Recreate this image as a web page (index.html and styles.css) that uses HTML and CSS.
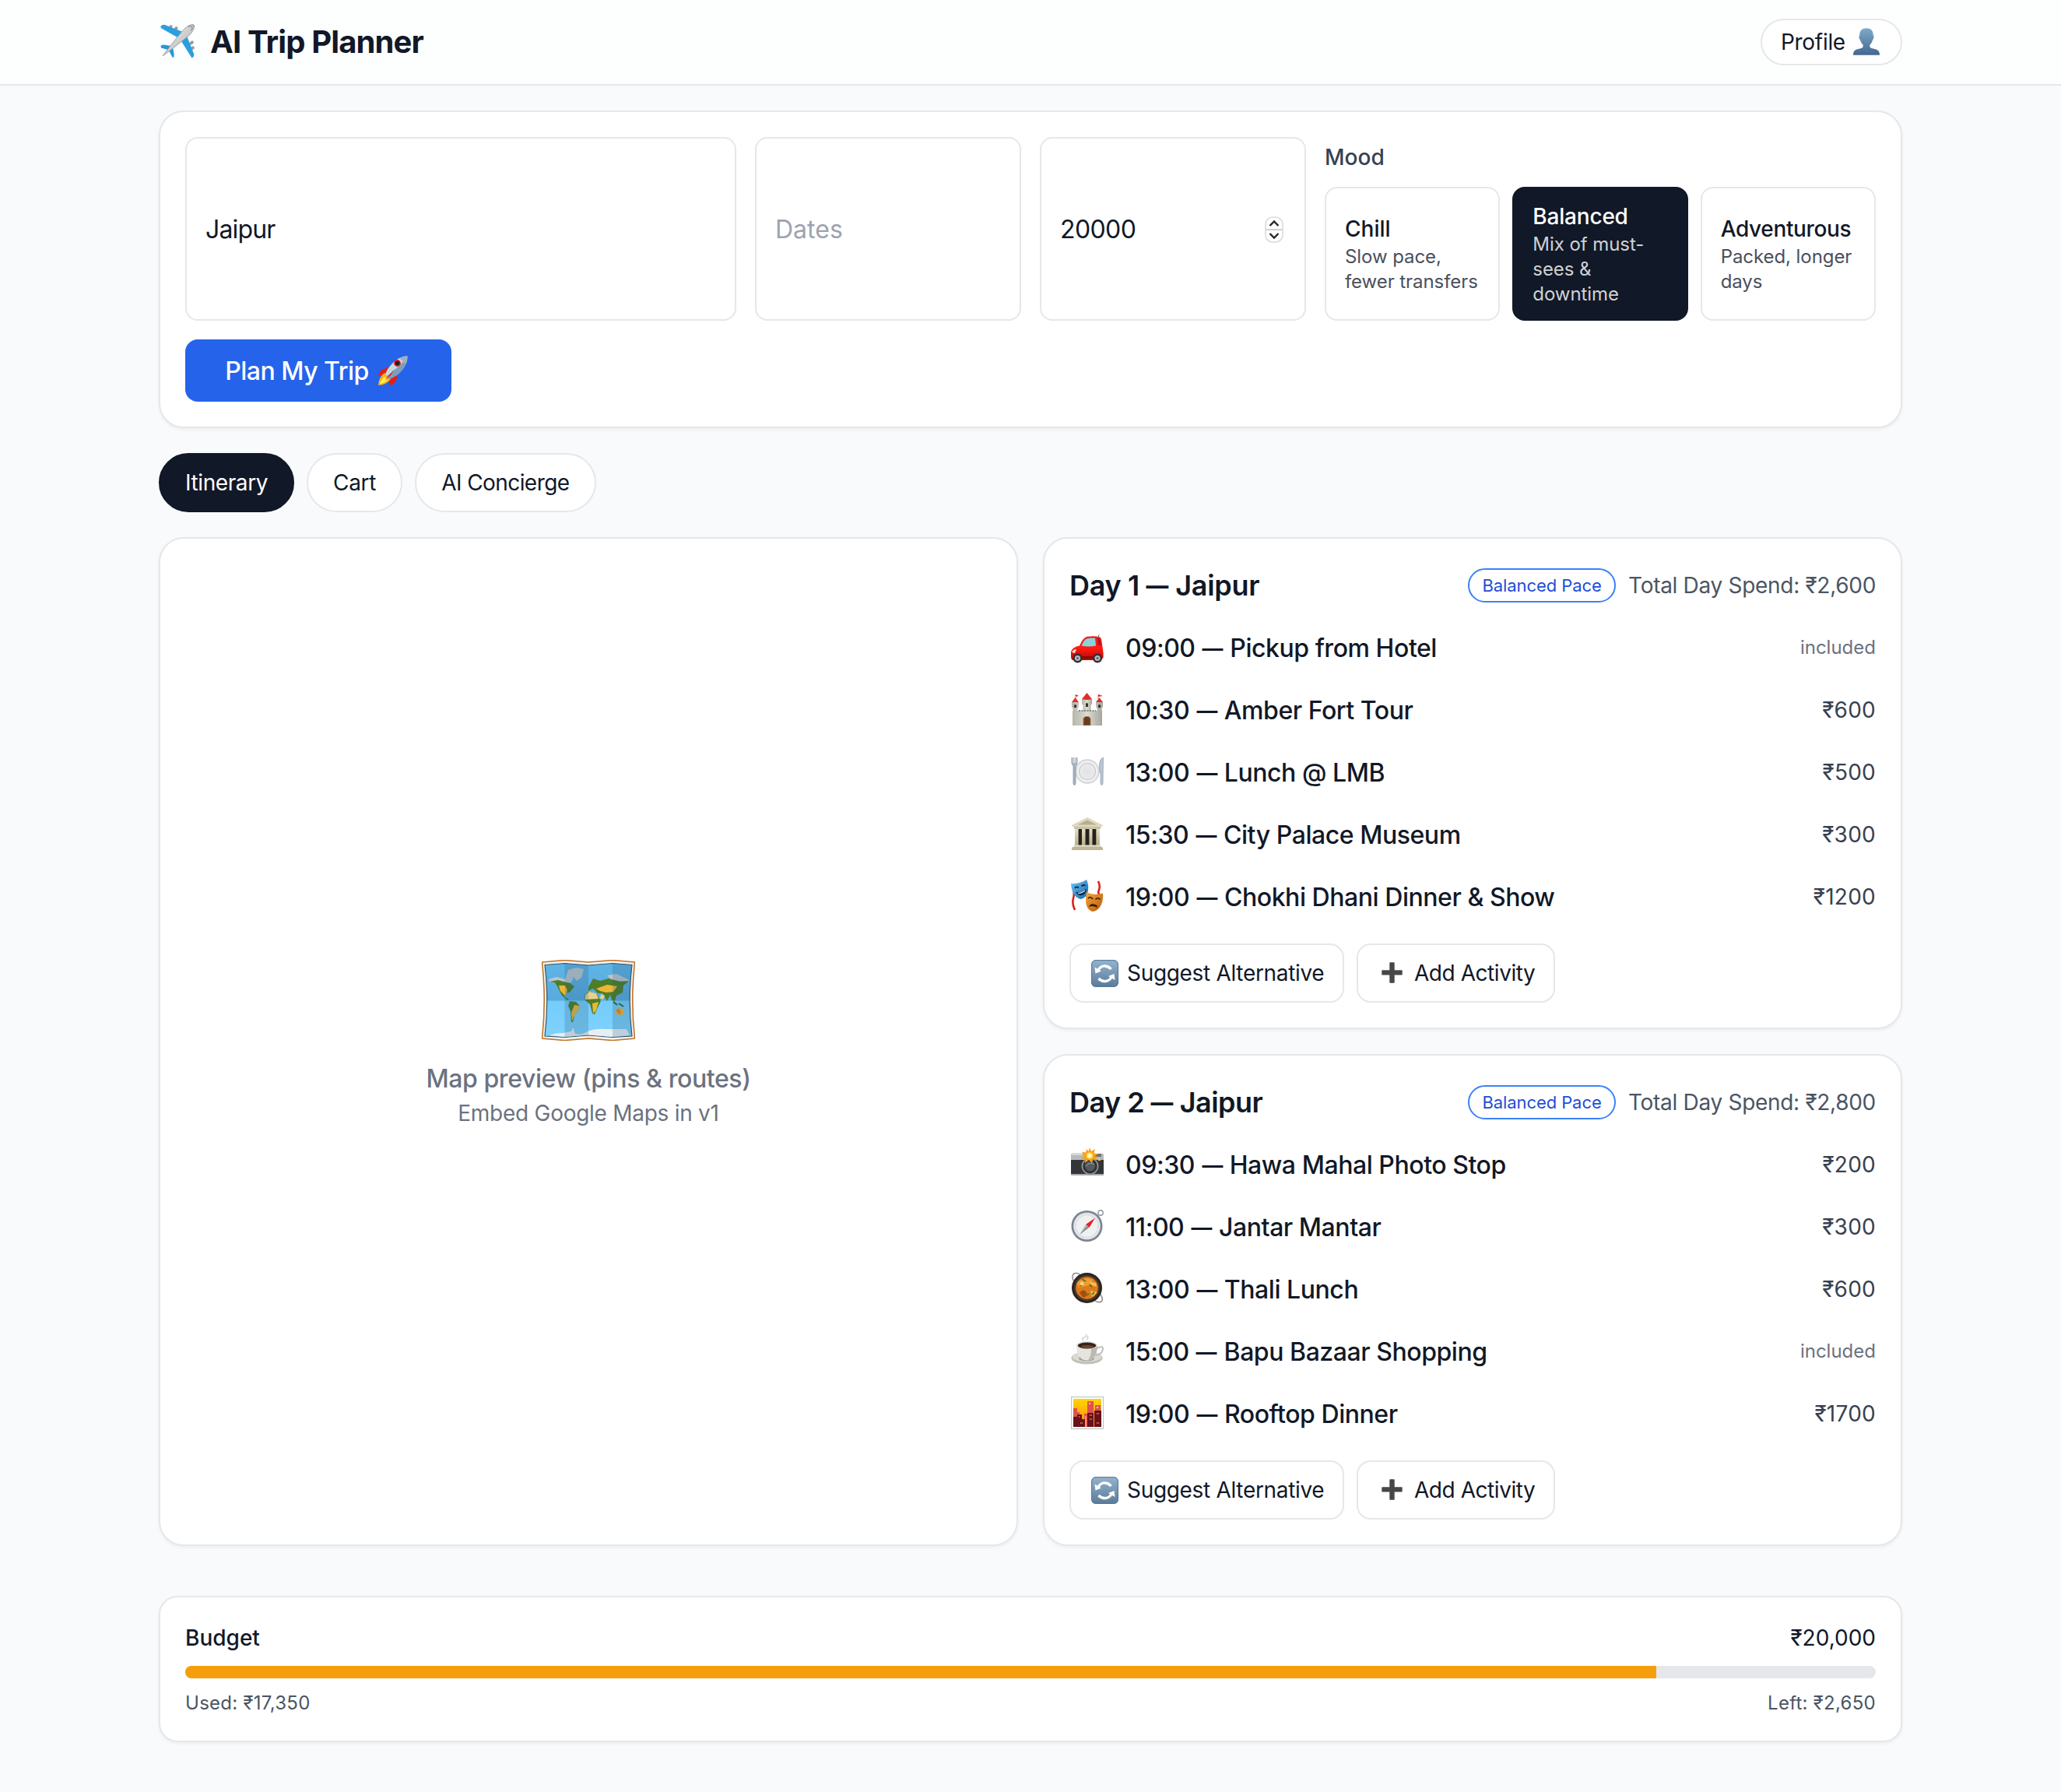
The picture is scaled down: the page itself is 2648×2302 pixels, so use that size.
FILE: index.html
```html
<!DOCTYPE html>
<html lang="en">
<head>
<meta charset="utf-8">
<title>AI Trip Planner</title>
<link rel="stylesheet" href="styles.css">
</head>
<body>
<svg class="sprite" aria-hidden="true">
  <defs>
    <linearGradient id="metal" x1="0" y1="0" x2="1" y2="1"><stop offset="0" stop-color="#f5f5f5"/><stop offset="1" stop-color="#a9a9ab"/></linearGradient>
    <linearGradient id="person" x1="0" y1="0" x2="0" y2="1"><stop offset="0" stop-color="#7ea9cb"/><stop offset="1" stop-color="#44678f"/></linearGradient>
    <linearGradient id="keycap" x1="0" y1="0" x2="0" y2="1"><stop offset="0" stop-color="#93b4d0"/><stop offset="1" stop-color="#5a7a98"/></linearGradient>
    <linearGradient id="stone" x1="0" y1="0" x2="0" y2="1"><stop offset="0" stop-color="#e6e1c8"/><stop offset="1" stop-color="#b5af90"/></linearGradient>
    <linearGradient id="wall" x1="0" y1="0" x2="1" y2="0"><stop offset="0" stop-color="#b3b4aa"/><stop offset=".5" stop-color="#dddcd4"/><stop offset="1" stop-color="#a3a499"/></linearGradient>
    <linearGradient id="blueMask" x1="0" y1="0" x2="1" y2="1"><stop offset="0" stop-color="#6cc4f4"/><stop offset="1" stop-color="#1767ad"/></linearGradient>
    <linearGradient id="goldMask" x1="0" y1="0" x2="1" y2="1"><stop offset="0" stop-color="#f5a83c"/><stop offset="1" stop-color="#b5590c"/></linearGradient>
    <linearGradient id="dusk" x1="0" y1="0" x2="0" y2="1"><stop offset="0" stop-color="#ffd400"/><stop offset="1" stop-color="#ff8a1c"/></linearGradient>
    <linearGradient id="redCar" x1="0" y1="0" x2="0" y2="1"><stop offset="0" stop-color="#e8201c"/><stop offset=".5" stop-color="#ff1a12"/><stop offset="1" stop-color="#b90705"/></linearGradient>
    <radialGradient id="plate"><stop offset="0" stop-color="#e2e3e4"/><stop offset=".6" stop-color="#e9eaeb"/><stop offset=".68" stop-color="#c6c8ca"/><stop offset=".75" stop-color="#f7f7f8"/><stop offset="1" stop-color="#d4d6d8"/></radialGradient>
    <linearGradient id="sea" x1="0" y1="0" x2="0" y2="1"><stop offset="0" stop-color="#5fb4e6"/><stop offset=".5" stop-color="#58aadf"/><stop offset=".51" stop-color="#75ccfb"/><stop offset="1" stop-color="#7fd2fb"/></linearGradient>
    <clipPath id="bowl"><circle cx="20.5" cy="20.5" r="14"/></clipPath>
  </defs>
  <symbol id="i-plane" viewBox="0 0 44 44">
    <g fill="#9b9b9d"><rect x="11" y="1" width="4" height="6" rx="2" transform="rotate(35 13 4)"/><rect x="18" y="3" width="4" height="6" rx="2" transform="rotate(35 20 6)"/><rect x="37" y="22" width="6" height="4" rx="2" transform="rotate(-35 40 24)"/><rect x="38" y="29" width="6" height="4" rx="2" transform="rotate(-35 41 31)"/></g>
    <path d="M.5 2.5Q3 0 6 1L29 10 22 17 1.500 5.500Q0 4.500.5 2.500zM34 15L43 38Q44 42 40.500 43.500L27 22z" fill="#2a9fdd"/>
    <path d="M.5 28Q2 26 4.500 26.500L14 28 10 33 1 30.500zM11 34L16 29.500 17.500 38Q18 42 16 43.500z" fill="#2498d8"/>
    <path d="M3 41L12 29 28 9Q35 1 41 .5 44 .5 43.500 4 42 11 34 17L15 32z" fill="url(#metal)" stroke="#8f8f91" stroke-width=".8"/>
    <path d="M36 3.500Q40 1.500 41 4T39 8" fill="none" stroke="#777" stroke-width="1"/><path d="M41 .5Q44 .5 43.500 4z" fill="#2aa3e0"/>
  </symbol>
  <symbol id="i-person" viewBox="0 0 34 35">
    <path d="M17 .3C22.500.3 26 3.500 25.700 9.500 27 10 26.600 14 25 15.200 24.300 18.500 22.600 20.300 21.400 21.500V24Q22 26 27 26.700C32 27.500 34 30 34 34.700H0C0 30 2 27.500 7 26.700 12 26 12.600 24.500 12.600 24V21.500C11.400 20.300 9.700 18.500 9 15.200 7.400 14 7 10 8.300 9.500 8 3.500 11.500.3 17 .3z" fill="url(#person)"/>
  </symbol>
  <symbol id="i-rocket" viewBox="0 0 39 39">
    <path d="M11 16L17 13 20 17 10 25 1 25Q3 18 11 16zM24 22L25 29Q23 36 15 38.500L15 31z" fill="#e91c10"/>
    <path d="M9 22Q2 27 1 38 12 37 17 30z" fill="#ffb21a"/><path d="M9 27Q4 32 3 36 8 36 13 31z" fill="#fff04a"/>
    <path d="M38.500.5Q29 .5 20 9 12 17 10 24L15 30Q25 27 32 18.500 39 10 38.500.5z" fill="#7d9fbd"/>
    <path d="M38.500.5Q29 .5 20 9 12 17 10 24L12 26Q30 13 38.500.5z" fill="#c7d8e4"/>
    <path d="M38.500.5Q33 .5 28 3L36 11Q39 6 38.500.5z" fill="#9fb0bd"/>
    <circle cx="25.500" cy="9.500" r="4.400" fill="#e31b12"/><circle cx="25.500" cy="9.500" r="2.800" fill="#261a22"/>
    <path d="M22 17L9 32 17 25z" fill="#d01510"/>
  </symbol>
  <symbol id="i-car" viewBox="0 0 42 42">
    <path d="M35 9L36 5.500" stroke="#555" stroke-width="1"/>
    <path d="M0 33V27Q2 21 11 19.500 15 10 20 8 30 6.500 37 8.500 39 9 39.500 14L41 24Q42 30 41.500 35L38 38H3Q0 38 0 33z" fill="url(#redCar)"/>
    <path d="M13.500 19.500Q17 11.500 20 10.500 26 9 31 9.700L32 19.500Q22 21.500 13.500 19.500z" fill="#8ed2d9"/><path d="M34 10L36 10Q38 10.500 38.500 19L35 19z" fill="#b5141a"/>
    <path d="M1 28Q3 24 7 24L5 29z" fill="#ffd8cf"/><rect x="13" y="33" width="15" height="3" fill="#8d0604"/>
    <g fill="#2f2f31"><circle cx="8.500" cy="35.500" r="6"/><circle cx="34" cy="35.500" r="6"/></g><g fill="#b9bcbf"><circle cx="8.500" cy="35.500" r="3.600"/><circle cx="34" cy="35.500" r="3.600"/></g><g fill="#5a5c5f"><circle cx="8.500" cy="35.500" r="1.500"/><circle cx="34" cy="35.500" r="1.500"/></g>
  </symbol>
  <symbol id="i-castle" viewBox="0 0 42 42">
    <path d="M6 8V2M35 8V2" stroke="#888" stroke-width=".8"/><path d="M6 2L10 4 6 5zM35 2L41 4 35 5z" fill="#e02a26"/>
    <path d="M2 23H40V42H2z" fill="url(#wall)"/><path d="M1 12H10V18L8.500 20V42H2.500V20L1 18zM32 12H41V18L39.500 20V42H33.500V20L32 18z" fill="url(#wall)"/>
    <path d="M14 8H27V14L25.500 16V24H15.500V16L14 14z" fill="url(#wall)"/>
    <path d="M14 8L20.500 0 27 8Q20.500 10 14 8zM1 12L5.500 6 10 12zM32 12L36.500 6 41 12z" fill="#e0302a"/>
    <path d="M10 23H32" stroke="#85867b" stroke-width="2" stroke-dasharray="2 1.500"/>
    <path d="M19 14Q20.500 12 22 14V18H19zM4 16Q5.500 14 7 16V19H4zM35 16Q36.500 14 38 16V19H35z" fill="#33332f"/>
    <path d="M16 42V34Q16 30.500 20.500 30.500T25 34V42z" fill="#6b3d1c" stroke="#9b7a55" stroke-width="1"/>
  </symbol>
  <symbol id="i-dining" viewBox="0 0 42 42">
    <circle cx="21" cy="21" r="15.500" fill="url(#plate)" stroke="#c9cbcd" stroke-width=".7"/>
    <path d="M1 3V10Q1 13 3 13.500V36Q3 38.500 4.500 38.500T6 36V13.500Q8 13 8 10V3" fill="#a8b4c2" stroke="#8795a6" stroke-width=".8"/><path d="M2.800 3V10M4.500 3V10M6.300 3V10" stroke="#fff" stroke-width=".7"/>
    <path d="M41.500 3Q37 5 36.500 12L36.800 22H38V36Q38 38.500 39.500 38.500T41 36z" fill="#b8c6d3" stroke="#8f9dab" stroke-width=".7"/>
  </symbol>
  <symbol id="i-museum" viewBox="0 0 42 42">
    <path d="M5 13H37V36H5z" fill="#5c5644"/><path d="M9.500 15H15V36H9.500zM18 15H23.500V36H18zM27 15H32V36H27z" fill="#25221b"/>
    <path d="M5 14H9.500V36H5zM14 14H18.500V36H14zM23.500 14H27.500V36H23.500zM32.500 14H37V36H32.500z" fill="url(#stone)"/>
    <path d="M21 0L41 10V11.500H1V10z" fill="#ddd8bd"/><path d="M21 3.500L33 9.500H9z" fill="#b5af90"/><path d="M3 11.500H39L37.500 15H4.500z" fill="#c8c3a6"/>
    <path d="M3.500 35.500H38.500V38L41 39V42H1V39L3.500 38z" fill="url(#stone)"/><path d="M1.500 39H40.500" stroke="#9b967b" stroke-width=".7"/>
  </symbol>
  <symbol id="i-masks" viewBox="0 0 42 42">
    <path d="M2 8Q5 17 3 24T5 39M35 2Q38 8 36 13T37 19" fill="none" stroke="#dc2118" stroke-width="2.600"/>
    <path d="M0 5Q11 6 20 0 23 6 22 14 21 23 12.500 25 5 23 2 15 0 9 0 5z" fill="url(#blueMask)"/>
    <path d="M5 11Q7 8 10 10.500M13.500 8.500Q16 5.500 18.500 8" fill="none" stroke="#092642" stroke-width="1.700"/><path d="M6 16Q14 18 19.500 11.500 20 19 14 20 9 21 6 16z" fill="#092642"/><path d="M9 17.500Q14 17.500 18 14" stroke="#d9effa" stroke-width="1.200" fill="none"/>
    <path d="M20 16Q29 21 41 17.500 42 25 38.500 33 34 41 27 41 20 38 19 29 18.500 22 20 16z" fill="url(#goldMask)"/>
    <path d="M22 24Q25 21 28 25M31.500 25.500Q34.500 22 37.500 25.500" fill="none" stroke="#3b1703" stroke-width="1.700"/><path d="M23 35Q25 28.500 33.500 33L34 36Q28 32.500 23 35z" fill="#3b1703"/>
  </symbol>
  <symbol id="i-cycle" viewBox="0 0 35 35">
    <rect width="35" height="35" rx="6" fill="url(#keycap)"/><rect x=".6" y=".6" width="33.800" height="33.800" rx="5.500" fill="none" stroke="#587793" stroke-width="1"/>
    <path d="M8.500 14Q12 7.500 18 8 22.500 8.300 25.500 12M26.500 21.500Q23 28 17 27.500 12.500 27.200 9.500 24" fill="none" stroke="#fff" stroke-width="3.300"/>
    <path d="M4.500 9.500L5.500 17.500 13 14.500zM30.500 26L29.500 18 22 21z" fill="#fff"/>
  </symbol>
  <symbol id="i-plus" viewBox="0 0 27 27"><path d="M10.300 1Q10.300.3 11 .3H16Q16.700.3 16.700 1V10.300H26Q26.700 10.300 26.700 11V15.700Q26.700 16.400 26 16.400H16.700V26Q16.700 26.700 16 26.700H11Q10.300 26.700 10.300 26V16.400H1Q.3 16.400.3 15.700V11Q.3 10.300 1 10.300H10.300z" fill="#474747"/></symbol>
  <symbol id="i-camera" viewBox="0 0 42 42">
    <path d="M1 8H41Q42 8 42 10V16H0V10Q0 8 1 8z" fill="#b8babc"/><rect x="1" y="7" width="13" height="3" fill="#d7d8da"/><rect x="31" y="8" width="8" height="4" fill="#7c6f63"/>
    <path d="M0 16H42V36H0z" fill="#343537"/><path d="M0 34H42V36H0z" fill="#aaa"/>
    <circle cx="24.500" cy="24" r="11" fill="#8d9093"/><circle cx="24.500" cy="24" r="9.200" fill="#303235"/><circle cx="24.500" cy="24" r="6.500" fill="#555a5e"/><path d="M19 24Q24 18 30 22" stroke="#9ba2a7" fill="none"/>
    <path d="M24 0L26 5 31 2 29.500 7.500 35 8 30.500 11.500 34 16 28.500 15 27 20 23 16 18 20 18.500 14.500 12 14 17.500 10.500 13.500 5.500 19 6.500 20 2 22.500 5z" fill="#f8a11b"/><circle cx="24" cy="10.500" r="4" fill="#ffe95c"/><circle cx="24" cy="10.500" r="2" fill="#fffbe0"/><rect x="35" y="15" width="3" height="2" fill="#f5c932"/>
  </symbol>
  <symbol id="i-compass" viewBox="0 0 42 42">
    <circle cx="38" cy="4" r="3.200" fill="none" stroke="#8a929c" stroke-width="1.400"/><circle cx="20.500" cy="21" r="20" fill="#79838f"/><circle cx="20.500" cy="21" r="17.600" fill="#c4cad0"/><circle cx="20.500" cy="21" r="16.500" fill="#eff0f1"/>
    <circle cx="20.500" cy="21" r="14.500" fill="none" stroke="#a5a9ad" stroke-width="1.500" stroke-dasharray=".7 1.800"/>
    <path d="M31 10.500L23.500 23 19 19z" fill="#ee1c25"/><path d="M11 32L19 19 23 23z" fill="#b5b7b9"/><path d="M11 32L21 21 23 23z" fill="#888"/>
  </symbol>
  <symbol id="i-pot" viewBox="0 0 42 42">
    <path d="M3 11Q0 2 6 1.500 10 1 12 4M31 37Q35 40 39 38 42 35 38 29" fill="none" stroke="#8d8b87" stroke-width="1.500"/>
    <circle cx="20.500" cy="20.500" r="19.500" fill="#2d2420"/><circle cx="20.500" cy="20.500" r="16.500" fill="#4b3b31"/><circle cx="20.500" cy="20.500" r="14.300" fill="#dc7b1b"/>
    <g clip-path="url(#bowl)"><path d="M7 14Q16 5 29 10L23 17 10 20z" fill="#f09c32"/><path d="M23 12L32 14 33 19 26 17zM25 24L34 26 27 32z" fill="#f7bf4d"/><path d="M11 27Q16 20 20 26 22 31 16 33z" fill="#a34e11"/><path d="M14 9L19 12M24 16L27 19M11 18L15 17M27 29L30 26M20 30L23 28" stroke="#58721d" stroke-width="1.800"/><circle cx="14" cy="15" r="2.500" fill="#fbd271"/></g>
  </symbol>
  <symbol id="i-coffee" viewBox="0 0 42 42">
    <path d="M16 8Q13 5 17 4T19 0M20 7Q23 5 21 2" fill="none" stroke="#cfcfcf" stroke-width="1.400"/>
    <ellipse cx="20.500" cy="30.500" rx="20" ry="8" fill="#c3c0b9"/><ellipse cx="20.500" cy="29" rx="18.500" ry="6.500" fill="#dbd9d3"/><ellipse cx="20" cy="31" rx="10" ry="3.600" fill="#a29f98"/>
    <path d="M33 18Q41 14 41 19 40 26 31 27" fill="none" stroke="#c4c1bb" stroke-width="2"/>
    <path d="M7 14H34Q34 26 27 32 21 35 14 32 7 26 7 14z" fill="#e6e4df"/><path d="M26 15H34Q34 26 27 32 24 33 22 33 27 27 26 15z" fill="#bcb9b2"/>
    <ellipse cx="20.500" cy="14" rx="13.500" ry="5" fill="#e3e1dc"/><ellipse cx="20.500" cy="14.500" rx="11.800" ry="4" fill="#392117"/><ellipse cx="21" cy="16" rx="8" ry="2" fill="#6c4530"/>
  </symbol>
  <symbol id="i-sunset" viewBox="0 0 42 42">
    <rect x=".5" y=".5" width="41" height="41" fill="#fbfcfb" stroke="#b7c4bf"/><rect x="3" y="3" width="36" height="36" fill="url(#dusk)"/>
    <path d="M3 15H8V20H11V39H3zM21 6H29V22H21zM31 11H38V21H31zM17 22H23V39H17z" fill="#e0524c"/>
    <path d="M3 26H8V23H14V29H19V39H3zM21 21H29V39H21zM30 18H39V39H30z" fill="#68101b"/>
    <path d="M10 26H12M12 34H15M24 24H27M24 29H27M33 22H36M33 34H36" stroke="#ff9b55" stroke-width="1.600" stroke-dasharray="1.200 .8"/><path d="M23 9H25M33 14H35" stroke="#fff0b0" stroke-width="1.500"/><path d="M19 25V39" stroke="#ff9068" stroke-width="2"/>
  </symbol>
  <symbol id="i-map" viewBox="0 0 120 104">
    <path d="M.5 3L29.500.5 60 3 91 .5 119.500 3Q114 52 119.500 101L91 103.500 60 101 29.500 103.500.5 101Q6 52 .5 3z" fill="#f7f2ec" stroke="#bd7429" stroke-width="1.600"/>
    <path d="M4 6.500L29.500 4.500 60 7 91 4.500 116 6.500Q110.500 52 116 98L91 99.500 60 97 29.500 99.500 4 98Q9.500 52 4 6.500z" fill="url(#sea)" stroke="#35566b" stroke-width="1.200"/>
    <path d="M10 97Q17 94 27 94L38 92 40 87 43 95Q51 97 57 93 65 88 80 89L109 89 113 97 91 99 60 96.500 29.500 99z" fill="#e9eef1"/>
    <path d="M9 25L19 22 30 25 34 13 45 10 54 12 51 23 45 27 41 22 38 29 24 29 10 29zM84 20L96 18 113 26 110 28 90 26z" fill="#bcc6cb"/>
    <path d="M9 28L21 26 36 30 42 34 36 42 32 42 29 47 35 51 33 52 26 46 21 36 17 29zM36 53L44 54 49 59 46 66 42 71 40 80 38 80 37 66 34 59zM60 35L66 24 75 27 86 24 101 28 112 27 105 33 104 42 96 46 94 53 90 52 88 45 84 53 78 43 72 43 66 37 60 40zM55 45L60 41 70 43 76 53 72 61 68 70 65 69 62 57 56 52z" fill="#4f7d25"/>
    <path d="M22 33L30 33 33 39 30 46 24 40zM42 58L49 59 46 66 41 73 39 79 38 68zM70 37L84 32 97 34 92 41 83 42 75 40zM65 56L73 54 70 65 66 69zM95 65L99 62 105 63 106 70 101 72 95 69z" fill="#eab839"/>
    <path d="M56 45L61 41 70 43 73 50 56 51zM77 44L81 46 79 51 74 49z" fill="#e9cf8c"/><path d="M92 54L97 58M99 56L105 60" stroke="#316b21" stroke-width="2"/><path d="M95 65L99 62 102 68 100 70z" fill="#f08422"/>
    <path d="M29.500 4.500L60 7V97L29.500 99.500zM91 4.500L116 6.500Q110.500 52 116 98L91 99.500z" fill="#204f78" opacity=".2"/>
  </symbol>
</svg>

<header class="topbar">
  <div class="topbar-inner">
    <div class="brand"><svg class="plane"><use href="#i-plane"/></svg><h1>AI Trip Planner</h1></div>
    <button class="profile"><span>Profile</span><svg class="person"><use href="#i-person"/></svg></button>
  </div>
</header>

<main class="page">
  <section class="card planner">
    <div class="field field-wide"><span class="destination">Jaipur</span></div>
    <div class="field"><span class="placeholder">Dates</span></div>
    <div class="field"><span class="amount">20000</span>
      <svg class="spinner" viewBox="0 0 24 34"><rect x="1" y="1" width="22" height="32" rx="9" fill="#fff" stroke="#d9d9d9" stroke-width="1.500"/><path d="M1 17H23" stroke="#d2d2d2" stroke-width="2"/><path d="M6.500 12L12 6.500 17.500 12M6.500 22L12 27.500 17.500 22" fill="none" stroke="#262626" stroke-width="2.400"/></svg>
    </div>
    <div class="mood">
      <div class="mood-label">Mood</div>
      <div class="mood-options">
        <button class="option"><b>Chill</b><span>Slow pace, fewer transfers</span></button>
        <button class="option selected"><b>Balanced</b><span>Mix of must-sees &amp; downtime</span></button>
        <button class="option adventurous"><b>Adventurous</b><span>Packed, longer days</span></button>
      </div>
    </div>
    <button class="plan"><span>Plan My Trip</span><svg class="rocket"><use href="#i-rocket"/></svg></button>
  </section>

  <nav class="tabs">
    <button class="tab active">Itinerary</button>
    <button class="tab tab-cart">Cart</button>
    <button class="tab tab-concierge">AI Concierge</button>
  </nav>

  <div class="columns">
    <section class="card map">
      <svg class="map-icon"><use href="#i-map"/></svg>
      <div class="map-title">Map preview (pins &amp; routes)</div>
      <div class="map-sub">Embed Google Maps in v1</div>
    </section>
    <div class="days">
      <section class="card day">
        <div class="day-head"><h2>Day 1 <i>—</i> Jaipur</h2><span class="pace">Balanced Pace</span><span class="total">Total Day Spend: ₹2,600</span></div>
        <ul class="stops">
          <li><svg><use href="#i-car"/></svg><span class="stop">09:00 <i>—</i> Pickup from Hotel</span><span class="included">included</span></li>
          <li><svg><use href="#i-castle"/></svg><span class="stop">10:30 <i>—</i> Amber Fort Tour</span><span class="price">₹600</span></li>
          <li><svg><use href="#i-dining"/></svg><span class="stop">13:00 <i>—</i> Lunch @ LMB</span><span class="price">₹500</span></li>
          <li><svg><use href="#i-museum"/></svg><span class="stop">15:30 <i>—</i> City Palace Museum</span><span class="price">₹300</span></li>
          <li><svg><use href="#i-masks"/></svg><span class="stop">19:00 <i>—</i> Chokhi Dhani Dinner &amp; Show</span><span class="price">₹1200</span></li>
        </ul>
        <div class="actions"><button class="suggest"><svg><use href="#i-cycle"/></svg><span>Suggest Alternative</span></button><button class="add"><svg><use href="#i-plus"/></svg><span>Add Activity</span></button></div>
      </section>
      <section class="card day day-two">
        <div class="day-head"><h2>Day 2 <i>—</i> Jaipur</h2><span class="pace">Balanced Pace</span><span class="total">Total Day Spend: ₹2,800</span></div>
        <ul class="stops">
          <li><svg><use href="#i-camera"/></svg><span class="stop">09:30 <i>—</i> Hawa Mahal Photo Stop</span><span class="price">₹200</span></li>
          <li><svg><use href="#i-compass"/></svg><span class="stop">11:00 <i>—</i> Jantar Mantar</span><span class="price">₹300</span></li>
          <li><svg><use href="#i-pot"/></svg><span class="stop">13:00 <i>—</i> Thali Lunch</span><span class="price">₹600</span></li>
          <li><svg><use href="#i-coffee"/></svg><span class="stop">15:00 <i>—</i> Bapu Bazaar Shopping</span><span class="included">included</span></li>
          <li><svg><use href="#i-sunset"/></svg><span class="stop">19:00 <i>—</i> Rooftop Dinner</span><span class="price">₹1700</span></li>
        </ul>
        <div class="actions"><button class="suggest"><svg><use href="#i-cycle"/></svg><span>Suggest Alternative</span></button><button class="add"><svg><use href="#i-plus"/></svg><span>Add Activity</span></button></div>
      </section>
    </div>
  </div>

  <section class="card budget">
    <div class="budget-row"><b>Budget</b><span>₹20,000</span></div>
    <div class="bar"><div class="fill" style="width:87%"></div></div>
    <div class="budget-foot"><span>Used: ₹17,350</span><span>Left: ₹2,650</span></div>
  </section>
</main>
</body>
</html>
```
FILE: styles.css
```css
* { box-sizing: border-box; }
body { margin: 0; background: #f9fafc; color: #111827; font-family: Inter, "Liberation Sans", sans-serif; font-size: 28px; line-height: 40px; }
button { margin: 0; font: inherit; color: inherit; background: #fff; border: 2px solid #e5e7eb; }
h1, h2, ul { margin: 0; padding: 0; }
b { font-weight: 500; }
svg { display: block; flex: none; }
span { white-space: nowrap; }
.sprite { position: absolute; width: 0; height: 0; }

/* Narrower em dash between the time and the title */
i { font-style: normal; display: inline-block; transform: scaleX(.84); margin: 0 -1.5px; }

.topbar { background: #fdfefe; border-bottom: 2px solid #e5e7eb; }
.topbar-inner { width: 2240px; margin: 0 auto; padding: 24px 0; display: flex; justify-content: space-between; align-items: center; }
.brand { display: flex; align-items: center; gap: 20px; padding-left: 2px; }
.plane { width: 44px; height: 44px; margin-bottom: 3px; }
h1 { font-size: 40px; line-height: 56px; font-weight: 700; letter-spacing: -.87px; }
.profile { width: 182px; height: 60px; padding: 0 0 0 24px; border-radius: 30px; display: flex; align-items: center; gap: 10px; letter-spacing: -.3px; }
.person { width: 34px; height: 35px; margin-bottom: 2px; }

.page { width: 2240px; margin: 0 auto; padding: 32px 0 64px; }
.card { background: #fff; border: 2px solid #e5e7eb; border-radius: 32px; padding: 32px; box-shadow: 0 2px 4px rgba(0, 0, 0, .05); }
.planner { display: grid; grid-template-columns: repeat(6, 1fr); grid-template-rows: 236px 80px; gap: 24px; }
.field { border: 2px solid #e5e7eb; border-radius: 16px; padding: 2px 27px 0 24px; display: flex; align-items: center; justify-content: space-between; font-size: 32px; }
.field-wide, .mood { grid-column: span 2; }
.destination { letter-spacing: -.85px; }
.amount { letter-spacing: -.6px; }
.placeholder { color: #9ca3af; }
.spinner { width: 24px; height: 34px; }
.mood-label { padding: 6px 0 18px; color: #374151; font-weight: 500; }
.mood-options { display: grid; grid-template-columns: repeat(3, 1fr); gap: 16px; height: 172px; }
.option { border-radius: 16px; padding: 0 24px; display: flex; flex-direction: column; justify-content: center; text-align: left; }
.option span { white-space: normal; font-size: 24px; line-height: 32px; color: #4a4f5c; letter-spacing: -.07px; }
.option.selected { background: #111827; border-color: #111827; color: #fff; }
.option.selected b { letter-spacing: -.2px; }
.option.selected span { color: #cfd1d4; }
.option.adventurous b { letter-spacing: -.35px; }
.plan { background: #2563eb; border: 0; border-radius: 16px; color: #fff; font-size: 32px; font-weight: 500; letter-spacing: -.5px; display: flex; align-items: center; justify-content: center; gap: 11px; padding: 2px 5px 0 0; }
.rocket { width: 39px; height: 39px; margin-bottom: 1px; }

.tabs { display: flex; gap: 16px; margin: 32px 0; }
.tab { height: 76px; padding: 0 32px; border-radius: 38px; letter-spacing: -.41px; }
.tab.active { background: #111827; border-color: #111827; color: #fff; }
.tab-cart { letter-spacing: -.3px; }
.tab-concierge { letter-spacing: -.57px; }

.columns { display: grid; grid-template-columns: 1fr 1fr; gap: 32px; }
.map { display: flex; flex-direction: column; align-items: center; justify-content: center; color: #6b7280; }
.map-icon { width: 120px; height: 104px; margin: 7px 0 25px; }
.map-title { font-size: 32px; line-height: 48px; font-weight: 500; letter-spacing: -.41px; }
.map-sub { letter-spacing: -.27px; }
.days { display: grid; gap: 32px; }
.day-head { display: flex; align-items: center; height: 56px; }
h2 { font-size: 36px; line-height: 56px; font-weight: 600; flex: 1; letter-spacing: -.3px; }
.day-two h2 { letter-spacing: -.53px; }
h2 i { margin: 0 -3.500px; transform: scaleX(.8); }
.pace { width: 190px; height: 44px; margin-right: 16px; border: 2px solid #3b82f6; border-radius: 22px; color: #1d4ed8; font-size: 22px; line-height: 40px; letter-spacing: -.08px; text-align: center; }
.total { color: #4b5563; letter-spacing: -.3px; }
.stops { list-style: none; display: grid; gap: 24px; padding: 24px 0 32px; }
.stops li { display: flex; align-items: center; height: 56px; }
.stops svg { width: 42px; height: 42px; margin: 0 28px 2px 2px; }
.stop { flex: 1; font-size: 32px; font-weight: 500; letter-spacing: -.45px; padding-top: 2px; }
.price { color: #374151; letter-spacing: .25px; }
.included { color: #6b7280; font-size: 24px; }
.actions { display: flex; gap: 16px; }
.actions button { height: 76px; border-radius: 18px; padding: 0; display: flex; align-items: center; }
.suggest { width: 353px; letter-spacing: -.32px; }
.suggest svg { width: 35px; height: 35px; margin: 0 11px 0 26px; }
.add { width: 255px; letter-spacing: -.45px; }
.add svg { width: 27px; height: 27px; margin: 0 15px 2px 30px; }

.budget { margin-top: 64px; border-radius: 24px; }
.budget-row, .budget-foot { display: flex; justify-content: space-between; }
.bar { height: 16px; margin: 16px 0; border-radius: 8px; background: #e5e7eb; overflow: hidden; }
.fill { height: 100%; background: #f59e0b; }
.budget-foot { font-size: 24px; line-height: 32px; color: #4b5563; letter-spacing: .27px; }
```
